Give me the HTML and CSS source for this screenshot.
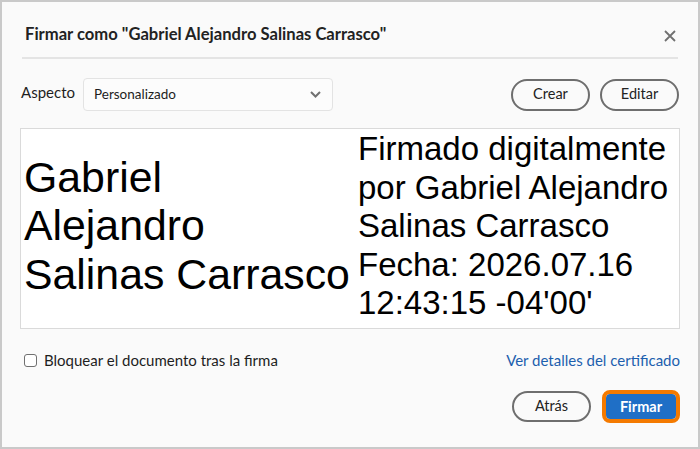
FILE: index.html
```html
<!DOCTYPE html>
<html lang="es">
<head>
<meta charset="utf-8">
<title>Firmar</title>
<link rel="stylesheet" href="styles.css">
</head>
<body>
<div class="dialog">
  <div class="header">
    <h1 class="title">Firmar como "Gabriel Alejandro Salinas Carrasco"</h1>
    <button class="close" aria-label="Cerrar">
      <svg width="12" height="12" viewBox="0 0 12 12"><path d="M1 1 L11 11 M11 1 L1 11" stroke="#707070" stroke-width="1.8" fill="none"/></svg>
    </button>
  </div>

  <div class="aspect-row">
    <span class="aspect-label">Aspecto</span>
    <div class="select">
      <span>Personalizado</span>
      <svg width="11" height="7" viewBox="0 0 11 7"><path d="M1 1 L5.5 5.5 L10 1" stroke="#707070" stroke-width="2" fill="none"/></svg>
    </div>
    <div class="spacer"></div>
    <button class="btn-outline">Crear</button>
    <button class="btn-outline btn-last">Editar</button>
  </div>

  <div class="preview">
    <div class="sig-name">Gabriel<br>Alejandro<br>Salinas Carrasco</div>
    <div class="sig-info">Firmado digitalmente<br>por Gabriel Alejandro<br>Salinas Carrasco<br>Fecha: 2026.07.16<br>12:43:15 -04'00'</div>
  </div>

  <div class="options-row">
    <label class="check"><span class="box"></span>Bloquear el documento tras la firma</label>
    <a class="link" href="#">Ver detalles del certificado</a>
  </div>

  <div class="actions">
    <button class="btn-outline">Atrás</button>
    <button class="btn-primary">Firmar</button>
  </div>
</div>
</body>
</html>
```

FILE: styles.css
```css
html, body {
  margin: 0;
  padding: 0;
}

body {
  font-family: "Lato", "Open Sans", sans-serif;
  color: #1e1e1e;
}

.dialog {
  width: 700px;
  height: 449px;
  box-sizing: border-box;
  border: 2px solid #c9c9c9;
  background: #fafafa;
  padding: 0 18px;
  display: flex;
  flex-direction: column;
}

.header {
  height: 57px;
  box-sizing: border-box;
  margin: 0 2px;
  padding: 21px 2px 0 3px;
  border-bottom: 2px solid #e4e4e4;
  display: flex;
  justify-content: space-between;
  align-items: flex-start;
}

.title {
  margin: 0;
  font-size: 16.6px;
  line-height: 22px;
  font-weight: 700;
  color: #222;
}

.close {
  border: 0;
  background: none;
  padding: 0;
  margin-top: 7px;
  width: 12px;
  height: 12px;
  display: flex;
}

.aspect-row {
  margin-top: 19px;
  display: flex;
  align-items: center;
  height: 33px;
}

.aspect-label {
  font-size: 15px;
  margin-left: 1px;
  margin-bottom: 5px;
  width: 62px;
}

.select {
  width: 250px;
  height: 33px;
  box-sizing: border-box;
  border: 1px solid #e3e3e3;
  border-radius: 4px;
  background: #fcfcfc;
  display: flex;
  align-items: center;
  justify-content: space-between;
  padding: 0 11px 2px 10px;
  font-size: 13.5px;
}

.select svg {
  margin-top: 2px;
}

.spacer {
  flex: 1;
}

.btn-outline {
  font-family: inherit;
  font-size: 14.5px;
  color: #222;
  background: transparent;
  border: 2px solid #6e6e6e;
  border-radius: 16px;
  width: 79px;
  height: 32px;
  padding: 0 0 2px;
  margin-left: 10px;
}

.btn-last {
  margin-right: 1px;
}

.preview {
  margin-top: 17px;
  height: 201px;
  box-sizing: border-box;
  border: 1px solid #dadada;
  background: #fff;
  display: flex;
  font-family: "Liberation Sans", Arial, sans-serif;
  color: #000;
}

.sig-name {
  width: 334px;
  padding-left: 3px;
  align-self: center;
  margin-bottom: 6px;
  font-size: 42.8px;
  line-height: 48.3px;
}

.sig-info {
  padding-top: 1px;
  font-size: 33px;
  line-height: 38.5px;
  white-space: nowrap;
}

.options-row {
  margin-top: 19px;
  display: flex;
  justify-content: space-between;
  align-items: center;
  height: 24px;
}

.check {
  display: flex;
  align-items: center;
  font-size: 15px;
  margin-left: 4px;
}

.box {
  width: 13px;
  height: 13px;
  box-sizing: border-box;
  border: 1.5px solid #707070;
  border-radius: 3px;
  background: #fff;
  margin-right: 7px;
}

.link {
  color: #1d5fae;
  text-decoration: none;
  font-size: 15px;
}

.actions {
  margin-top: 19px;
  display: flex;
  justify-content: flex-end;
  align-items: center;
}

.actions .btn-outline {
  height: 31px;
  margin-left: 0;
  margin-right: 15px;
}

.btn-primary {
  font-family: inherit;
  font-size: 14.5px;
  font-weight: 700;
  color: #fff;
  background: #1f6fc6;
  border: 0;
  border-radius: 4px;
  width: 70px;
  height: 25px;
  padding: 0 0 1px;
  margin-right: 4px;
  outline: 4px solid #f47a00;
  outline-offset: 0;
}
```
